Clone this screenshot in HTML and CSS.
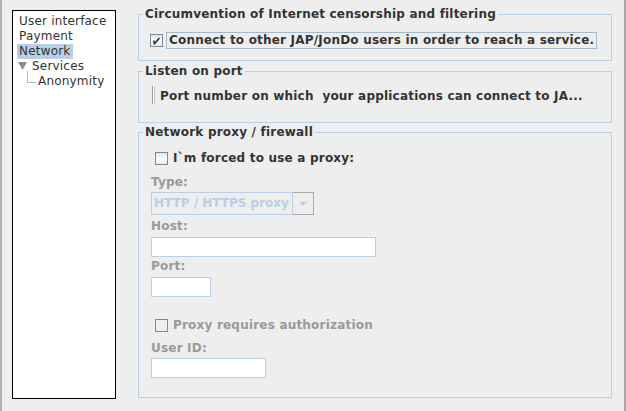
FILE: index.html
```html
<!DOCTYPE html>
<html lang="en">
<head>
  <meta charset="UTF-8">
  <title>Network settings</title>
  <link rel="stylesheet" href="styles.css">
</head>
<body>
  <div class="window">
    <ul class="tree">
      <li class="node"><span class="label">User interface</span></li>
      <li class="node"><span class="label">Payment</span></li>
      <li class="node"><span class="label selected">Network</span></li>
      <li class="node">
        <svg class="toggle" width="9" height="8" viewBox="0 0 9 8"><polygon points="0,0 9,0 4.5,8" fill="#8c8c8c"/></svg>
        <span class="label">Services</span>
      </li>
      <li class="node"><span class="branch"></span><span class="label">Anonymity</span></li>
    </ul>

    <div class="settings">
      <fieldset class="group">
        <legend>Circumvention of Internet censorship and filtering</legend>
        <div class="group-body body-circ">
          <div class="check-row">
            <span class="box">
              <svg width="11" height="11" viewBox="0 0 11 11"><polyline points="2.5,5.5 3.5,8.5 8.5,3" fill="none" stroke="#333" stroke-width="1.7"/></svg>
            </span>
            <span class="check-text focused">Connect to other JAP/JonDo users in order to reach a service.</span>
          </div>
        </div>
      </fieldset>

      <fieldset class="group group-port">
        <legend>Listen on port</legend>
        <div class="group-body body-port">
          <div class="port-row">
            <span class="mini-field"></span>
            <span class="port-text">Port number on which  your applications can connect to JA...</span>
          </div>
        </div>
      </fieldset>

      <fieldset class="group group-proxy">
        <legend>Network proxy / firewall</legend>
        <div class="group-body body-proxy">
          <div class="check-row proxy-check">
            <span class="box"></span>
            <span class="check-text">I`m forced to use a proxy:</span>
          </div>
          <div class="caption caption-type">Type:</div>
          <div class="combo">
            <span class="combo-field">HTTP / HTTPS proxy</span>
            <span class="combo-arrow">
              <svg width="8" height="4" viewBox="0 0 8 4"><polygon points="0,0 8,0 4,4" fill="#b8cfe5"/></svg>
            </span>
          </div>
          <div class="caption caption-host">Host:</div>
          <input class="field field-host" type="text">
          <div class="caption caption-port">Port:</div>
          <input class="field field-port" type="text">
          <div class="check-row auth-check">
            <span class="box box-disabled"></span>
            <span class="check-text disabled">Proxy requires authorization</span>
          </div>
          <div class="caption caption-user">User ID:</div>
          <input class="field field-user" type="text">
        </div>
      </fieldset>
    </div>
  </div>
</body>
</html>
```

FILE: styles.css
```css
body {
  margin: 0;
  background: #eeeeee;
  font-family: 'DejaVu Sans', 'Liberation Sans', sans-serif;
  font-size: 12px;
  letter-spacing: 0.2px;
  color: #333333;
}

.window {
  display: flex;
  align-items: flex-start;
  width: 626px;
  height: 411px;
  box-sizing: border-box;
  border-left: 2px solid #b4b4ae;
  border-right: 2px solid #a9a9a9;
}

/* tree on the left */
.tree {
  list-style: none;
  margin: 10px 0 0 10px;
  padding: 3px 0 0 4px;
  width: 104px;
  height: 389px;
  box-sizing: border-box;
  border: 1px solid #000;
  background: #fff;
}

.node {
  display: flex;
  align-items: flex-start;
  height: 15px;
  line-height: 15px;
  white-space: nowrap;
}

.label {
  padding: 0 2px;
}

.selected {
  background: #b8cfe5;
}

.toggle {
  margin: 3px 3px 0 1px;
}

.branch {
  width: 9px;
  height: 12px;
  margin: -3px 0 0 10px;
  box-sizing: border-box;
  border-left: 1px solid #a9bdd1;
  border-bottom: 1px solid #a9bdd1;
}

/* right side */
.settings {
  margin: 7px 0 0 22px;
  width: 474px;
}

.group {
  margin: 0;
  padding: 0;
  min-width: 0;
  border: 1px solid #b8cfe5;
}

.group legend {
  margin-left: 4px;
  padding: 0 2px;
  font-weight: bold;
  line-height: 14px;
}

.group-port {
  margin-top: 3px;
}

.group-proxy {
  margin-top: 2px;
}

.body-circ {
  padding: 11px 0 11px 11px;
}

.body-port {
  padding: 8px 0 18px 13px;
}

.body-proxy {
  padding: 12px 0 19px 12px;
}

.check-row {
  display: flex;
  align-items: center;
  font-weight: bold;
  line-height: 15px;
}

.box {
  display: flex;
  align-items: center;
  justify-content: center;
  width: 13px;
  height: 13px;
  box-sizing: border-box;
  border: 1px solid #7a8a99;
  background: linear-gradient(#dce7f2, #ffffff 60%, #e8e8e8);
}

.box-disabled {
  background: #eeeeee;
}

.check-text {
  margin-left: 3px;
  padding: 0 2px;
}

.focused {
  border: 1px solid #a3b8cc;
}

.proxy-check .box,
.auth-check .box {
  margin-left: 4px;
}

.auth-check {
  margin-top: 21px;
}

.disabled {
  color: #999999;
}

.port-row {
  display: flex;
  align-items: flex-start;
}

.mini-field {
  width: 3px;
  height: 18px;
  box-sizing: border-box;
  border-left: 1px solid #9a9a9a;
  border-right: 1px solid #c4c4c4;
  background: #fff;
}

.port-text {
  margin: 3px 0 0 5px;
  font-weight: bold;
  line-height: 15px;
  white-space: pre;
}

.caption {
  font-weight: bold;
  line-height: 15px;
  color: #999999;
}

.caption-type {
  margin-top: 9px;
}

.caption-host {
  margin-top: 4px;
}

.caption-port {
  margin-top: 2px;
}

.caption-user {
  margin-top: 8px;
}

.combo {
  display: flex;
  margin-top: 2px;
  width: 163px;
  height: 23px;
}

.combo-field {
  flex: 1;
  min-width: 0;
  overflow: hidden;
  border: 1px solid #b8cfe5;
  padding-left: 2px;
  font-weight: bold;
  line-height: 21px;
  letter-spacing: 0;
  color: #b8cfe5;
  white-space: nowrap;
}

.combo-arrow {
  display: flex;
  flex: none;
  align-items: center;
  justify-content: center;
  width: 21px;
  box-sizing: border-box;
  border: 1px solid #a8a8a8;
  border-left: none;
}

.field {
  display: block;
  margin: 3px 0 0;
  padding: 0;
  height: 20px;
  box-sizing: border-box;
  border: 1px solid #b8cfe5;
  background: #fff;
  outline: none;
}

.field-host {
  width: 225px;
}

.field-port {
  width: 60px;
}

.field-user {
  margin-top: 2px;
  width: 115px;
}
```
